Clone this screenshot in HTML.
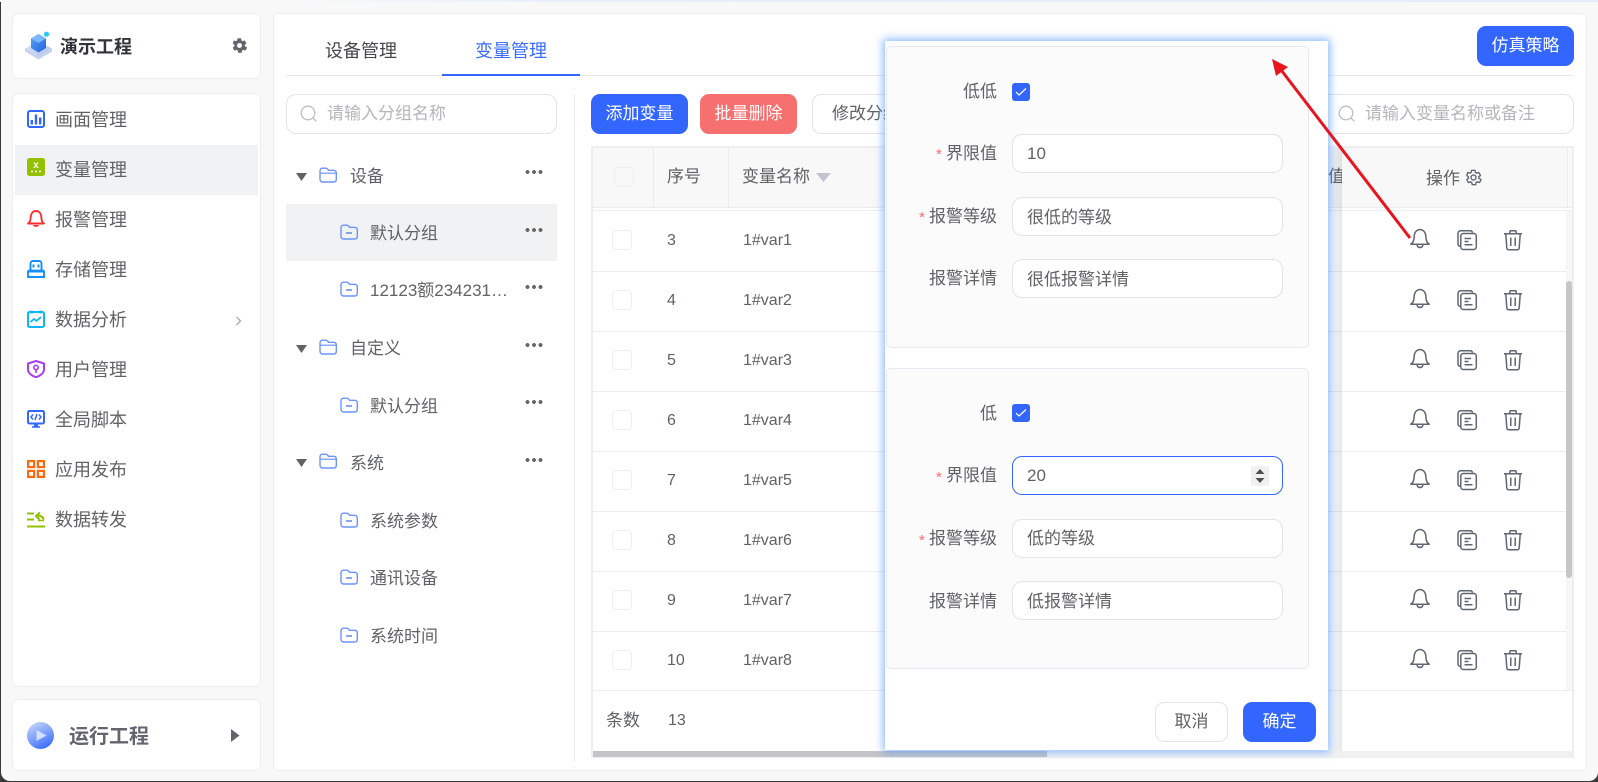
<!DOCTYPE html>
<html lang="zh-CN"><head><meta charset="utf-8"><title>变量管理</title>
<style>
html,body{margin:0;padding:0;width:1598px;height:782px;overflow:hidden;background:#3a3a3a}
body{position:relative;font-family:"Liberation Sans","Noto Sans CJK SC",sans-serif;color:#606266}
div,svg,span{position:absolute;box-sizing:border-box}
#win{left:1px;top:0;width:1597px;height:781px;background:#f8f8f8;border-radius:0 0 9px 9px;overflow:hidden}
#top{left:0;top:0;width:1598px;height:2px;background:linear-gradient(90deg,#f8f8f8 0,#f8f8f8 15%,#e8f0fb 35%,#e4ecfa 100%)}
.card{background:#fff;border:1px solid #eeeeee;border-radius:6px}
.t{white-space:nowrap;line-height:24px;height:24px;font-size:17px;margin-top:1px}
.m{font-size:18px;left:55px}
.btn{border-radius:9px;color:#fff;font-size:17px;text-align:center;line-height:40px;height:40px;width:97px;top:94px}
.dots{width:18px;height:4px;background:radial-gradient(circle at 2.5px 2px,#666 1.8px,transparent 2.1px),radial-gradient(circle at 9px 2px,#666 1.8px,transparent 2.1px),radial-gradient(circle at 15.5px 2px,#666 1.8px,transparent 2.1px);left:525px}
.fo{width:18px;height:16px;left:340px}
.hl{height:1px;background:#eeeeee;left:593px;width:975px}
.cb{left:612px;width:20px;height:20px;border:1.5px solid #eeeeee;border-radius:4px;background:#fff;margin-top:-1px}
.ic{width:22px;height:22px;fill:none;stroke:#606673;stroke-width:1.5}
.in{left:1012px;width:271px;height:39px;border:1px solid #e4e4e6;border-radius:10px;background:#fff;font-size:17px;line-height:38px;padding-left:14px;color:#606266;white-space:nowrap}
.lab{right:601px;text-align:right;font-size:17px;line-height:24px;height:24px;white-space:nowrap;margin-top:1px}
.star{color:#f56c6c;font-size:15px;line-height:16px;height:16px}
.ck{left:1012px;width:18px;height:18px;background:#3366ff;border-radius:3px}
</style></head><body>
<svg width="0" height="0" style="position:absolute">
<defs>
<symbol id="bell" viewBox="0 0 22 22"><path d="M1.800 17.200c1.900-1.400 2.900-3 3.100-5.200L5.300 8c.3-3 2.900-5.500 5.700-5.500S16.400 5 16.700 8l.4 4c.2 2.200 1.200 3.800 3.100 5.200z" stroke-linejoin="round"/><path d="M8 17.500c.2 2 1.400 3 3 3s2.800-1 3-3"/></symbol>
<symbol id="copy" viewBox="0 0 22 22"><path d="M16.500 3.800C16.300 2.500 15.500 1.800 14 1.800H5c-2 0-3 1-3 3v10c0 1.500.7 2.300 2 2.600"/><rect x="4.800" y="4.500" width="15.500" height="16" rx="2.500"/><path d="M8.500 9.500h6.500M8.500 12.500h4M8.500 15.800h8"/></symbol>
<symbol id="trash" viewBox="0 0 22 22"><path d="M2 4.800h18M7.500 4.500 8.200 1.800h5.600l.7 2.700M3.800 5l1 14c.1 1.200.8 1.800 2 1.800h8.400c1.200 0 1.900-.6 2-1.800l1-14M8.800 8.500v8.500M13.200 8.500v8.500"/></symbol>
<symbol id="f1" viewBox="0 0 18 16"><path d="M1 4c0-1.700 1-2.800 2.500-2.800h3.300c1 0 1.500.4 2 1.100l.7 1h5c1.800 0 2.800 1 2.800 2.700v6.200c0 1.700-1 2.800-2.800 2.800H3.800C2 15 1 13.900 1 12.200z" fill="none" stroke="#6c93ff" stroke-width="1.400"/><path d="M1.300 6.200h15.400" fill="none" stroke="#6c93ff" stroke-width="1.200"/></symbol>
<symbol id="f2" viewBox="0 0 18 16"><path d="M1 4c0-1.700 1-2.800 2.500-2.800h3.300c1 0 1.500.4 2 1.100l.7 1h5c1.800 0 2.800 1 2.800 2.700v6.200c0 1.700-1 2.800-2.800 2.800H3.800C2 15 1 13.900 1 12.200z" fill="none" stroke="#6c93ff" stroke-width="1.400"/><path d="M6 9h6" stroke="#5c7fd8" stroke-width="1.400"/></symbol>
<symbol id="srch" viewBox="0 0 18 18"><circle cx="8" cy="8" r="6.800" fill="none" stroke="#bcbec2" stroke-width="1.300"/><path d="m13 13 3.400 3.400" stroke="#bcbec2" stroke-width="1.300"/></symbol>
</defs></svg>
<div id="win">
</div>
<div id="top"></div>

<!-- sidebar -->
<div class="card" style="left:12px;top:13px;width:249px;height:66px"></div>
<svg style="left:24px;top:30px" width="30" height="32" viewBox="0 0 30 30"><defs><linearGradient id="lg" x1="0" y1="0" x2="1" y2="1"><stop offset="0" stop-color="#e6ebf7"/><stop offset="1" stop-color="#a9bde8"/></linearGradient><linearGradient id="lc" x1="0" y1="0" x2="1" y2="1"><stop offset="0" stop-color="#5da4f7"/><stop offset="1" stop-color="#2261dd"/></linearGradient></defs><path d="M1 17.500 14.500 10 28 17.500 14.500 25.500z" fill="url(#lg)"/><path d="M1 17.500v3l13.500 8 13.500-8v-3l-13.500 8z" fill="#c5d2ef"/><path d="M7 7.500 14.500 3 22 7.500v9.500l-7.500 4.500L7 17z" fill="url(#lc)"/><path d="M7 7.500 14.500 3 22 7.500l-7.500 4.500z" fill="#79b8fb"/><circle cx="22.500" cy="3.200" r="2.600" fill="#28c9fb"/></svg>
<div class="t" style="left:60px;top:34px;font-size:18px;font-weight:700;color:#303338">演示工程</div>
<svg style="left:231px;top:37px" width="17" height="17" viewBox="0 0 24 24"><path fill="#62646e" d="M19.400 13c.1-.3.100-.7.100-1s0-.7-.1-1l2.200-1.700c.2-.2.200-.4.100-.6l-2.100-3.600c-.1-.2-.4-.3-.6-.2l-2.600 1c-.5-.4-1.100-.8-1.700-1l-.4-2.700c0-.2-.3-.4-.5-.4h-4.200c-.3 0-.5.200-.5.400l-.4 2.700c-.6.200-1.200.6-1.700 1l-2.600-1c-.2-.1-.5 0-.6.200L2.600 8.700c-.1.200-.1.400.1.600L4.900 11c-.1.300-.1.700-.1 1s0 .7.100 1l-2.200 1.700c-.2.200-.2.400-.1.600l2.100 3.600c.1.200.4.300.6.200l2.600-1c.5.400 1.100.8 1.700 1l.4 2.700c0 .2.200.4.500.4h4.200c.3 0 .5-.2.500-.4l.4-2.700c.6-.2 1.200-.6 1.700-1l2.600 1c.2.100.5 0 .6-.2l2.100-3.600c.1-.2.100-.4-.1-.6zM12 15.500a3.500 3.500 0 1 1 0-7 3.500 3.500 0 0 1 0 7z"/></svg>

<div class="card" style="left:12px;top:93px;width:249px;height:594px"></div>
<div style="left:15px;top:145px;width:243px;height:50px;background:#f1f2f4"></div>
<svg style="left:27px;top:110px" width="18" height="18" viewBox="0 0 18 18"><rect x="1" y="1" width="16" height="16" rx="2" fill="none" stroke="#3366ff" stroke-width="2"/><path d="M4.800 10v4.500M9 4.500v10M13.200 7.500v7" stroke="#3366ff" stroke-width="2.400"/></svg>
<div class="t m" style="top:107px">画面管理</div>
<svg style="left:27px;top:158px" width="18" height="18" viewBox="0 0 18 18"><rect width="18" height="18" rx="2.500" fill="#93c000"/><text x="9" y="10" font-size="10" font-weight="700" fill="#fff" text-anchor="middle" font-family="Liberation Sans">x</text><path d="M4 13.500h2M8 13.500h2M12 13.500h2" stroke="#fff" stroke-width="1.500"/></svg>
<div class="t m" style="top:157px">变量管理</div>
<svg style="left:27px;top:210px" width="18" height="18" viewBox="0 0 18 18"><path d="M1 13.500c1.700-1.200 2.400-2.600 2.500-4.500L3.800 6c.4-3 2.500-5 5.200-5s4.800 2 5.200 5l.3 3c.1 1.900.8 3.300 2.500 4.500z" fill="none" stroke="#fb2f2f" stroke-width="1.900" stroke-linejoin="round"/><path d="M6 15h6c-.5 2.500-5.500 2.500-6 0z" fill="#fb2f2f"/></svg>
<div class="t m" style="top:207px">报警管理</div>
<svg style="left:27px;top:260px" width="18" height="18" viewBox="0 0 18 18"><path d="M3.500 11V3.500C3.500 2 4.500 1 6 1h6c1.500 0 2.500 1 2.500 2.500V11" fill="none" stroke="#1590ff" stroke-width="1.900"/><path d="M6.500 4.500v3M11.500 4.500v3" stroke="#1590ff" stroke-width="2"/><path d="M1 11.500h16v5.500H1z" fill="none" stroke="#1590ff" stroke-width="1.900"/><path d="M1 10.500h16" stroke="#1590ff" stroke-width="1.800"/></svg>
<div class="t m" style="top:257px">存储管理</div>
<svg style="left:27px;top:310px" width="18" height="18" viewBox="0 0 18 18"><rect x="1" y="2" width="16" height="15" rx="1.500" fill="none" stroke="#12b5f5" stroke-width="2"/><path d="M4.500 .5v3M13.500 .5v3" stroke="#12b5f5" stroke-width="2.200"/><path d="m3.500 12 3.500-3 2.500 1.800L14 7" fill="none" stroke="#12b5f5" stroke-width="1.800"/></svg>
<div class="t m" style="top:307px">数据分析</div>
<svg style="left:235px;top:316px" width="8" height="10" viewBox="0 0 8 10"><path d="m1.500 1 4 4-4 4" fill="none" stroke="#a8a8ac" stroke-width="1.300"/></svg>
<svg style="left:27px;top:360px" width="18" height="18" viewBox="0 0 18 18"><path d="M9 1 17 3.500v6c0 3.500-4 6.500-8 7.700C5 16 1 13 1 9.500v-6z" fill="none" stroke="#a83df5" stroke-width="2" stroke-linejoin="round"/><circle cx="9" cy="7.500" r="2.200" fill="none" stroke="#a83df5" stroke-width="1.600"/><path d="M9 9.500v3.500" stroke="#a83df5" stroke-width="1.600"/></svg>
<div class="t m" style="top:357px">用户管理</div>
<svg style="left:27px;top:410px" width="18" height="18" viewBox="0 0 18 18"><rect x="1" y="1" width="16" height="12.500" rx="1.500" fill="none" stroke="#3366ff" stroke-width="2"/><path d="M6 4.500 4 7l2 2.500M12 4.500 14 7l-2 2.500M10 4 8 10" fill="none" stroke="#3366ff" stroke-width="1.500"/><path d="M7.500 14h3l1 2.500h-5z" fill="#3366ff"/><path d="M5 17h8" stroke="#3366ff" stroke-width="1.500"/></svg>
<div class="t m" style="top:407px">全局脚本</div>
<svg style="left:27px;top:460px" width="18" height="18" viewBox="0 0 18 18"><g fill="none" stroke="#ff6a10" stroke-width="2.200"><rect x="1.100" y="1.100" width="6" height="6"/><rect x="10.900" y="1.100" width="6" height="6"/><rect x="1.100" y="10.900" width="6" height="6"/><rect x="10.900" y="10.900" width="6" height="6"/></g></svg>
<div class="t m" style="top:457px">应用发布</div>
<svg style="left:27px;top:511px" width="18" height="18" viewBox="0 0 18 18"><path d="M0 2.500h7M0 8.500h7M0 15.500h18" stroke="#93c000" stroke-width="2.100"/><path d="M16.500 8.500c-.4-3-3-4-5.500-3.500M13 1.500 9 5l3.500 3.500" fill="none" stroke="#93c000" stroke-width="2.100"/><path d="M11 9.500h6" stroke="#93c000" stroke-width="1.500"/></svg>
<div class="t m" style="top:507px">数据转发</div>

<div class="card" style="left:12px;top:699px;width:249px;height:72px"></div>
<svg style="left:27px;top:722px" width="27" height="27" viewBox="0 0 27 27"><defs><linearGradient id="rg" x1=".2" y1="0" x2=".7" y2="1"><stop offset="0" stop-color="#c5d6fb"/><stop offset="1" stop-color="#3a6cff"/></linearGradient></defs><circle cx="13.500" cy="13.500" r="13.500" fill="url(#rg)"/><path d="M9.500 8 19.500 13.500 9.500 19z" fill="#e3ebfd" fill-opacity=".85"/></svg>
<div class="t" style="left:69px;top:723px;font-size:20px;font-weight:700;color:#62646f;line-height:26px;height:26px">运行工程</div>
<svg style="left:231px;top:729px" width="9" height="13" viewBox="0 0 9 13"><path d="M0 0 8.500 6.500 0 13z" fill="#62646e"/></svg>

<!-- main -->
<div class="card" style="left:273px;top:13px;width:1314px;height:758px"></div>
<div class="t" style="left:325px;top:38px;font-size:18px;color:#45474c">设备管理</div>
<div class="t" style="left:475px;top:38px;font-size:18px;color:#3a6cff">变量管理</div>
<div style="left:286px;top:75px;width:1288px;height:1px;background:#e8e8ea"></div>
<div style="left:442px;top:74px;width:138px;height:2px;background:#3366ff"></div>
<div class="btn" style="left:1477px;top:26px;background:#3366ff">仿真策略</div>

<!-- tree -->
<div style="left:286px;top:94px;width:271px;height:40px;border:1px solid #e4e4e6;border-radius:10px"></div>
<svg style="left:300px;top:105px" width="18" height="18"><use href="#srch"/></svg>
<div class="t" style="left:327px;top:101px;color:#b4b6bb">请输入分组名称</div>
<div style="left:286px;top:204px;width:271px;height:57px;background:#f1f2f4"></div>
<svg style="left:296px;top:173px" width="11" height="8" viewBox="0 0 11 8"><path d="M0 0h11L5.500 8z" fill="#606266"/></svg>
<svg style="left:296px;top:345px" width="11" height="8" viewBox="0 0 11 8"><path d="M0 0h11L5.500 8z" fill="#606266"/></svg>
<svg style="left:296px;top:459px" width="11" height="8" viewBox="0 0 11 8"><path d="M0 0h11L5.500 8z" fill="#606266"/></svg>
<svg class="fo" style="left:319px;top:167px"><use href="#f1"/></svg><div class="t" style="left:350px;top:164px">设备</div><div class="dots" style="top:170px"></div>
<svg class="fo" style="top:224px"><use href="#f2"/></svg><div class="t" style="left:370px;top:221px">默认分组</div><div class="dots" style="top:228px"></div>
<svg class="fo" style="top:281px"><use href="#f2"/></svg><div class="t" style="left:370px;top:278px">12123额234231…</div><div class="dots" style="top:285px"></div>
<svg class="fo" style="left:319px;top:339px"><use href="#f1"/></svg><div class="t" style="left:350px;top:336px">自定义</div><div class="dots" style="top:343px"></div>
<svg class="fo" style="top:397px"><use href="#f2"/></svg><div class="t" style="left:370px;top:394px">默认分组</div><div class="dots" style="top:400px"></div>
<svg class="fo" style="left:319px;top:453px"><use href="#f1"/></svg><div class="t" style="left:350px;top:451px">系统</div><div class="dots" style="top:458px"></div>
<svg class="fo" style="top:512px"><use href="#f2"/></svg><div class="t" style="left:370px;top:509px">系统参数</div>
<svg class="fo" style="top:569px"><use href="#f2"/></svg><div class="t" style="left:370px;top:566px">通讯设备</div>
<svg class="fo" style="top:627px"><use href="#f2"/></svg><div class="t" style="left:370px;top:624px">系统时间</div>
<div style="left:574px;top:94px;width:1px;height:668px;background:#eeeeee"></div>

<!-- toolbar -->
<div class="btn" style="left:591px;background:#3366ff">添加变量</div>
<div class="btn" style="left:700px;background:#f77070">批量删除</div>
<div class="btn" style="left:812px;width:108px;background:#fff;border:1px solid #e4e4e6;color:#606266;line-height:38px">修改分组</div>
<div style="left:1320px;top:94px;width:254px;height:40px;border:1px solid #e4e4e6;border-radius:10px"></div>
<svg style="left:1338px;top:105px" width="18" height="18"><use href="#srch"/></svg>
<div class="t" style="left:1365px;top:101px;color:#b4b6bb">请输入变量名称或备注</div>

<!-- table -->
<div style="left:591px;top:146px;width:983px;height:612px;border:2px solid #eeeeee;background:#fff"></div>
<div style="left:593px;top:148px;width:979px;height:59px;background:#f8f8f8"></div>
<div style="left:593px;top:207px;width:979px;height:1px;background:#ececec"></div>
<div class="hl" style="top:210px;width:979px"></div>
<div style="left:653px;top:148px;width:1px;height:59px;background:#ececec"></div>
<div style="left:728px;top:148px;width:1px;height:59px;background:#ececec"></div>
<div class="cb" style="left:614px;top:167px;background:#f8f8f8;margin-top:0"></div>
<div class="t" style="left:667px;top:164px">序号</div>
<div class="t" style="left:742px;top:164px">变量名称</div>
<svg style="left:816px;top:173px" width="15" height="9" viewBox="0 0 15 9"><path d="M0 0h15L7.500 9z" fill="#c2c5ce"/></svg>
<div class="t" style="left:1328px;top:164px">值</div>

<div class="hl" style="top:271px"></div><div class="hl" style="top:331px"></div><div class="hl" style="top:391px"></div><div class="hl" style="top:451px"></div><div class="hl" style="top:511px"></div><div class="hl" style="top:571px"></div><div class="hl" style="top:631px"></div><div class="hl" style="top:690px;width:979px"></div>

<div class="cb" style="top:231px"></div><div class="t" style="left:667px;top:228px;font-size:16px">3</div><div class="t" style="left:743px;top:228px;font-size:16px">1#var1</div>
<div class="cb" style="top:291px"></div><div class="t" style="left:667px;top:288px;font-size:16px">4</div><div class="t" style="left:743px;top:288px;font-size:16px">1#var2</div>
<div class="cb" style="top:351px"></div><div class="t" style="left:667px;top:348px;font-size:16px">5</div><div class="t" style="left:743px;top:348px;font-size:16px">1#var3</div>
<div class="cb" style="top:411px"></div><div class="t" style="left:667px;top:408px;font-size:16px">6</div><div class="t" style="left:743px;top:408px;font-size:16px">1#var4</div>
<div class="cb" style="top:471px"></div><div class="t" style="left:667px;top:468px;font-size:16px">7</div><div class="t" style="left:743px;top:468px;font-size:16px">1#var5</div>
<div class="cb" style="top:531px"></div><div class="t" style="left:667px;top:528px;font-size:16px">8</div><div class="t" style="left:743px;top:528px;font-size:16px">1#var6</div>
<div class="cb" style="top:591px"></div><div class="t" style="left:667px;top:588px;font-size:16px">9</div><div class="t" style="left:743px;top:588px;font-size:16px">1#var7</div>
<div class="cb" style="top:651px"></div><div class="t" style="left:667px;top:648px;font-size:16px">10</div><div class="t" style="left:743px;top:648px;font-size:16px">1#var8</div>
<div class="t" style="left:606px;top:708px">条数</div><div class="t" style="left:668px;top:708px;font-size:16px">13</div>

<!-- horizontal scrollbar -->
<div style="left:593px;top:751px;width:979px;height:6px;background:#f1f1f1"></div>
<div style="left:593px;top:751px;width:454px;height:6px;background:#c4c4c8"></div>

<!-- fixed col -->
<div style="left:1326px;top:148px;width:16px;height:603px;background:linear-gradient(90deg,rgba(0,0,0,0),rgba(0,0,0,.09))"></div>
<div style="left:1342px;top:148px;width:224px;height:59px;background:#f8f8f8"></div>
<div style="left:1342px;top:207px;width:230px;height:1px;background:#ececec"></div>
<div style="left:1342px;top:210px;width:224px;height:1px;background:#eeeeee"></div>
<div style="left:1567px;top:148px;width:1px;height:59px;background:#ececec"></div>
<div style="left:1566px;top:211px;width:6px;height:479px;background:#f6f6f6"></div>
<div style="left:1566px;top:281px;width:6px;height:297px;background:#c6c6ca;border-radius:3px"></div>
<div class="t" style="left:1426px;top:166px">操作</div>
<svg style="left:1465px;top:169px" width="17" height="17" viewBox="0 0 24 24"><path fill="none" stroke="#606673" stroke-width="1.900" d="M19.400 13c.1-.3.100-.7.100-1s0-.7-.1-1l2.200-1.700c.2-.2.200-.4.100-.6l-2.100-3.600c-.1-.2-.4-.3-.6-.2l-2.600 1c-.5-.4-1.100-.8-1.700-1l-.4-2.700c0-.2-.3-.4-.5-.4h-4.200c-.3 0-.5.200-.5.400l-.4 2.700c-.6.200-1.200.6-1.700 1l-2.600-1c-.2-.1-.5 0-.6.200L2.600 8.700c-.1.200-.1.400.1.600L4.900 11c-.1.300-.1.700-.1 1s0 .7.100 1l-2.200 1.700c-.2.200-.2.400-.1.600l2.100 3.600c.1.200.4.300.6.200l2.600-1c.5.400 1.100.8 1.700 1l.4 2.700c0 .2.200.4.500.4h4.200c.3 0 .5-.2.500-.4l.4-2.700c.6-.2 1.200-.6 1.700-1l2.600 1c.2.100.5 0 .6-.2l2.100-3.600c.1-.2.100-.4-.1-.6z"/><circle cx="12" cy="12" r="3.500" fill="none" stroke="#606673" stroke-width="1.900"/></svg>

<svg class="ic" style="left:1409px;top:227px"><use href="#bell"/></svg><svg class="ic" style="left:1456px;top:229px"><use href="#copy"/></svg><svg class="ic" style="left:1502px;top:229px"><use href="#trash"/></svg>
<svg class="ic" style="left:1409px;top:287px"><use href="#bell"/></svg><svg class="ic" style="left:1456px;top:289px"><use href="#copy"/></svg><svg class="ic" style="left:1502px;top:289px"><use href="#trash"/></svg>
<svg class="ic" style="left:1409px;top:347px"><use href="#bell"/></svg><svg class="ic" style="left:1456px;top:349px"><use href="#copy"/></svg><svg class="ic" style="left:1502px;top:349px"><use href="#trash"/></svg>
<svg class="ic" style="left:1409px;top:407px"><use href="#bell"/></svg><svg class="ic" style="left:1456px;top:409px"><use href="#copy"/></svg><svg class="ic" style="left:1502px;top:409px"><use href="#trash"/></svg>
<svg class="ic" style="left:1409px;top:467px"><use href="#bell"/></svg><svg class="ic" style="left:1456px;top:469px"><use href="#copy"/></svg><svg class="ic" style="left:1502px;top:469px"><use href="#trash"/></svg>
<svg class="ic" style="left:1409px;top:527px"><use href="#bell"/></svg><svg class="ic" style="left:1456px;top:529px"><use href="#copy"/></svg><svg class="ic" style="left:1502px;top:529px"><use href="#trash"/></svg>
<svg class="ic" style="left:1409px;top:587px"><use href="#bell"/></svg><svg class="ic" style="left:1456px;top:589px"><use href="#copy"/></svg><svg class="ic" style="left:1502px;top:589px"><use href="#trash"/></svg>
<svg class="ic" style="left:1409px;top:647px"><use href="#bell"/></svg><svg class="ic" style="left:1456px;top:649px"><use href="#copy"/></svg><svg class="ic" style="left:1502px;top:649px"><use href="#trash"/></svg>

<!-- modal -->
<div style="left:885px;top:41px;width:443px;height:709px;background:#fff;box-shadow:0 0 8px 2px rgba(64,140,255,.6)"></div>
<div style="left:886px;top:46px;width:423px;height:302px;background:#fbfbfc;border:1px solid #e6e8ef;border-radius:5px"></div>
<div style="left:886px;top:368px;width:423px;height:301px;background:#fbfbfc;border:1px solid #e6e8ef;border-radius:5px"></div>

<div class="lab" style="top:79px">低低</div>
<div class="ck" style="top:83px"><svg width="18" height="18" viewBox="0 0 18 18"><path d="m4 9 3 3 7-6.500" fill="none" stroke="#fff" stroke-width="1.200"/></svg></div>
<div class="star" style="left:936px;top:147px">*</div><div class="lab" style="top:141px">界限值</div>
<div class="in" style="top:134px">10</div>
<div class="star" style="left:919px;top:210px">*</div><div class="lab" style="top:204px">报警等级</div>
<div class="in" style="top:197px;line-height:39px">很低的等级</div>
<div class="lab" style="top:266px">报警详情</div>
<div class="in" style="top:259px;line-height:40px">很低报警详情</div>

<div class="lab" style="top:401px">低</div>
<div class="ck" style="top:404px"><svg width="18" height="18" viewBox="0 0 18 18"><path d="m4 9 3 3 7-6.500" fill="none" stroke="#fff" stroke-width="1.200"/></svg></div>
<div class="star" style="left:936px;top:470px">*</div><div class="lab" style="top:463px">界限值</div>
<div class="in" style="top:456px;border:1.500px solid #3366ff;line-height:37px">20</div>
<div style="left:1251px;top:466px;width:18px;height:20px;background:#f0f0f0"></div>
<svg style="left:1255px;top:469px" width="10" height="14" viewBox="0 0 10 14"><path d="M5 0 9.500 5H.5zM5 14 .5 9h9z" fill="#505050"/></svg>
<div class="star" style="left:919px;top:533px">*</div><div class="lab" style="top:526px">报警等级</div>
<div class="in" style="top:519px">低的等级</div>
<div class="lab" style="top:589px">报警详情</div>
<div class="in" style="top:581px;line-height:40px">低报警详情</div>

<div class="btn" style="left:1155px;top:702px;width:73px;background:#fff;border:1px solid #e4e4e6;color:#606266;line-height:38px">取消</div>
<div class="btn" style="left:1243px;top:702px;width:73px;background:#3366ff">确定</div>

<!-- annotation arrow -->
<svg style="left:1260px;top:50px" width="160" height="195" viewBox="1260 50 160 195"><path d="M1410 238 1278 66" stroke="#e8151f" stroke-width="3" fill="none"/><path d="M1272 59 1288 67 1276 76z" fill="#e8151f"/></svg>
</body></html>
